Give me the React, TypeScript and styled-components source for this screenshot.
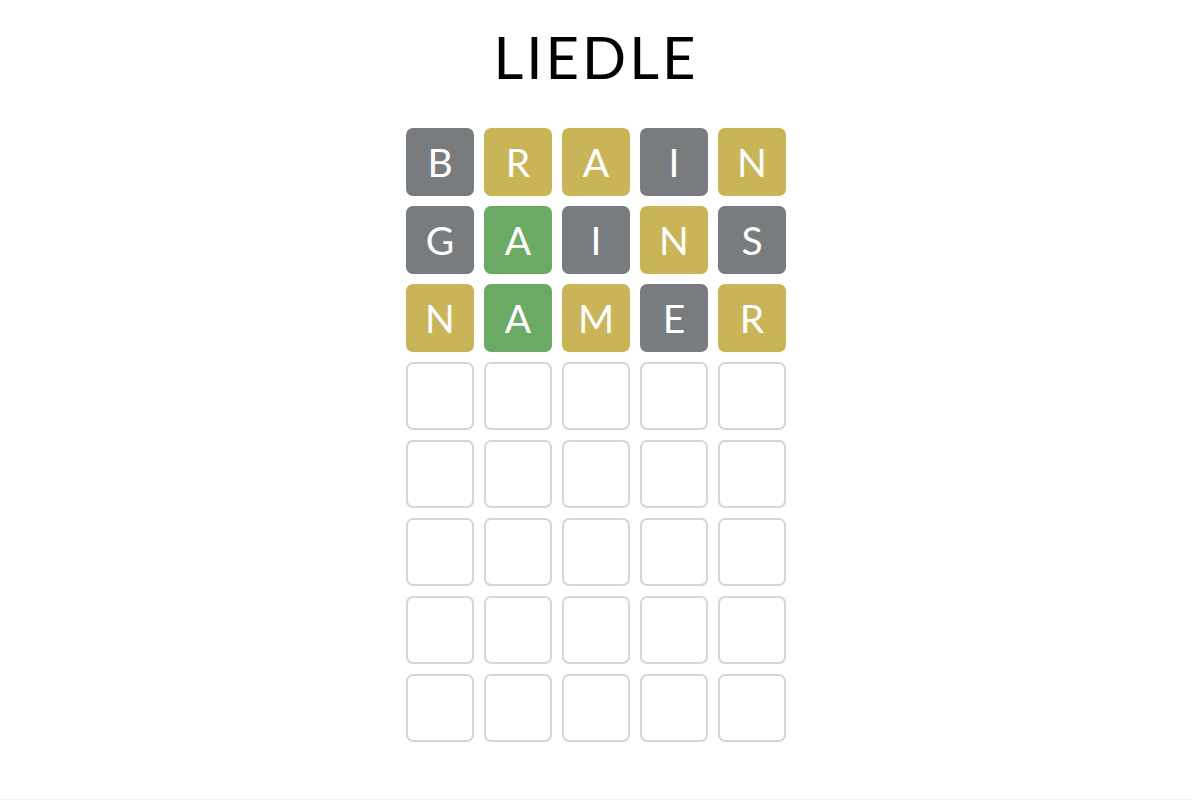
import React from "react";
import styled, { createGlobalStyle } from "styled-components";

const Global = createGlobalStyle`
  html, body { margin: 0; padding: 0; background: #ffffff; }
  body { font-family: "Lato", "Open Sans", sans-serif; }
`;

const Page = styled.div`
  width: 1192px;
  height: 799px;
  border-bottom: 1px solid #f2f2f2;
  display: flex;
  flex-direction: column;
  align-items: center;
`;

const Title = styled.h1`
  margin: 0;
  padding-top: 22px;
  height: 128px;
  box-sizing: border-box;
  font-size: 58px;
  line-height: 70px;
  font-weight: 400;
  letter-spacing: 3px;
  color: #000;
`;

const Board = styled.div`
  display: grid;
  grid-template-columns: repeat(5, 68px);
  grid-auto-rows: 68px;
  gap: 10px;
`;

type State = "absent" | "present" | "correct" | "empty";

const colors: Record<State, string> = {
  absent: "#787c7e",
  present: "#c9b458",
  correct: "#6aaa64",
  empty: "#ffffff",
};

const Tile = styled.div<{ $state: State }>`
  box-sizing: border-box;
  border-radius: 7px;
  background: ${(p) => colors[p.$state]};
  border: ${(p) => (p.$state === "empty" ? "2px solid #d3d6da" : "none")};
  color: #ffffff;
  display: flex;
  align-items: center;
  justify-content: center;
  font-size: 39px;
  font-weight: 400;
`;

const rows: [string, State][][] = [
  [["B", "absent"], ["R", "present"], ["A", "present"], ["I", "absent"], ["N", "present"]],
  [["G", "absent"], ["A", "correct"], ["I", "absent"], ["N", "present"], ["S", "absent"]],
  [["N", "present"], ["A", "correct"], ["M", "present"], ["E", "absent"], ["R", "present"]],
];

export default function App() {
  const tiles: [string, State][] = [];
  rows.forEach((r) => tiles.push(...r));
  while (tiles.length < 40) tiles.push(["", "empty"]);
  return (
    <>
      <Global />
      <Page>
        <Title>LIEDLE</Title>
        <Board>
          {tiles.map(([l, s], i) => (
            <Tile key={i} $state={s}>
              {l}
            </Tile>
          ))}
        </Board>
      </Page>
    </>
  );
}
